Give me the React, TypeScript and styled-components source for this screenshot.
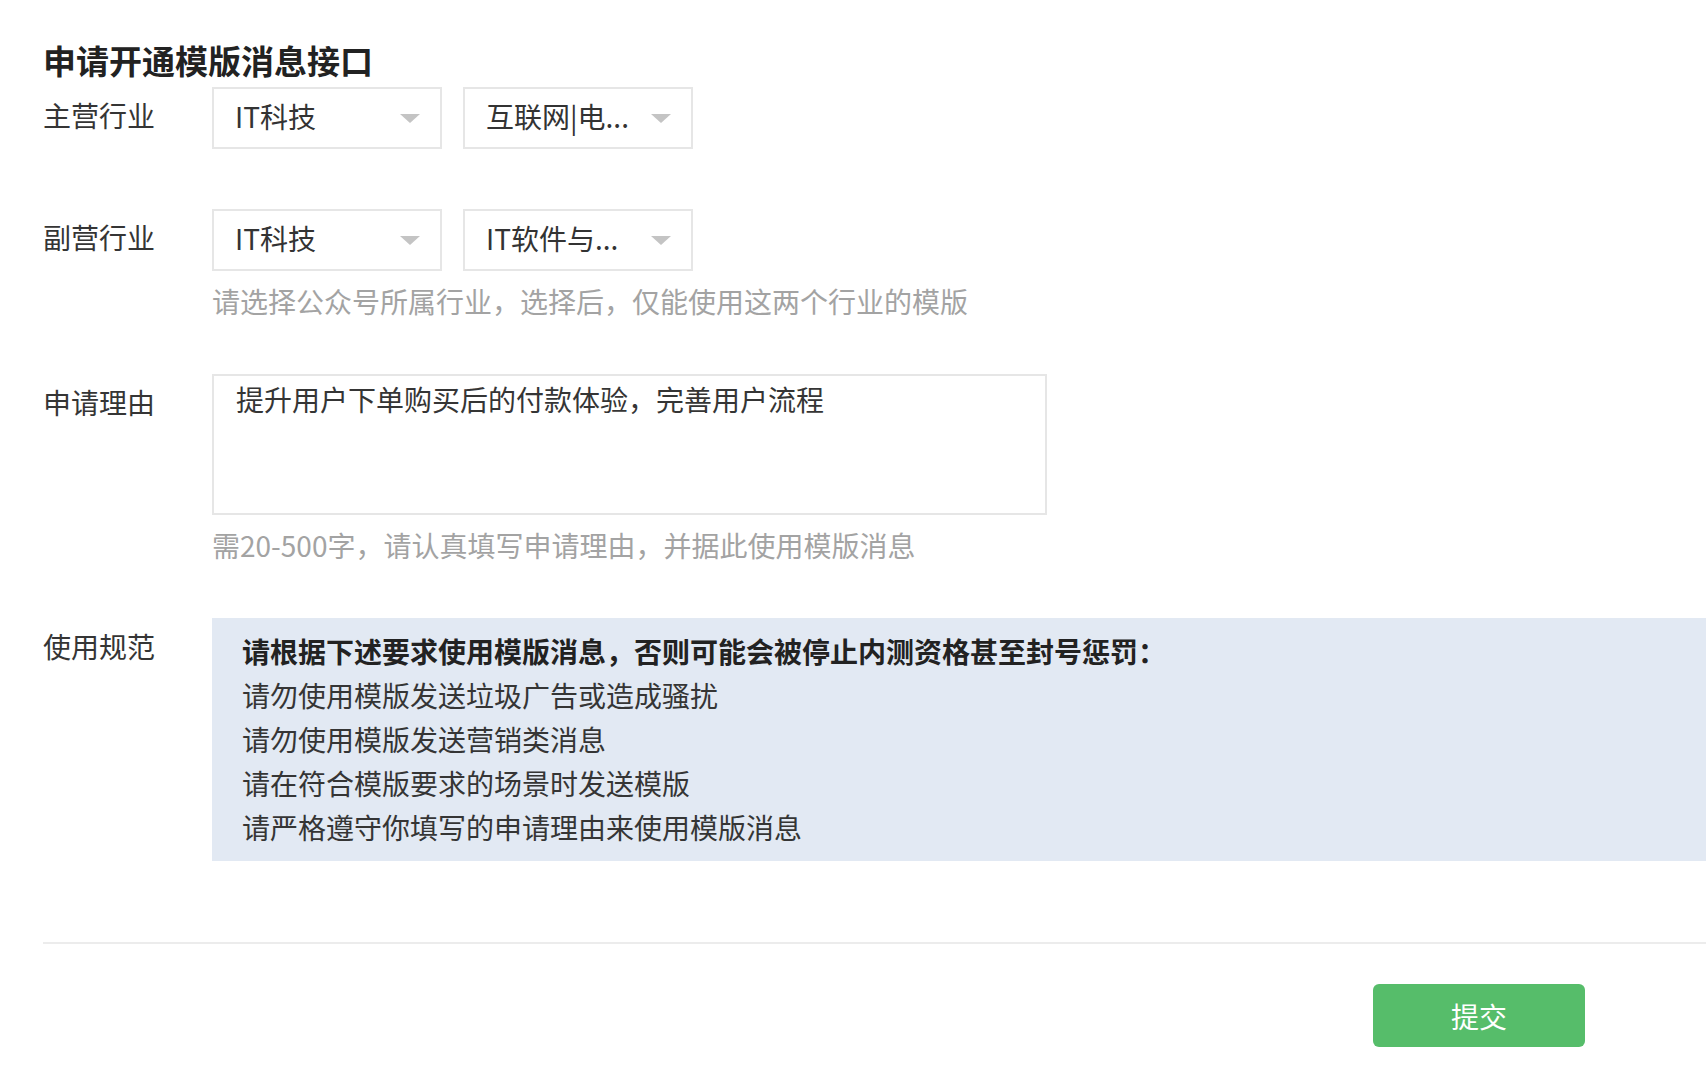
import React from "react";
import styled, { createGlobalStyle } from "styled-components";

const GlobalStyle = createGlobalStyle`
  html, body {
    margin: 0;
    padding: 0;
    background: #fff;
  }
  body {
    font-family: "Noto Sans CJK SC", "Noto Sans", sans-serif;
    color: #353535;
  }
`;

const Page = styled.div`
  padding: 40px 0 40px 43px;
`;

const Title = styled.h2`
  margin: 0;
  font-size: 33px;
  line-height: 40px;
  font-weight: 700;
  color: #222;
`;

const Row = styled.div<{ $top: number }>`
  display: grid;
  grid-template-columns: 169px 1fr;
  margin-top: ${(p) => p.$top}px;
`;

const Label = styled.div`
  font-size: 28px;
  line-height: 57px;
  color: #353535;
`;

const Field = styled.div`
  display: flex;
  flex-direction: column;
`;

const Selects = styled.div`
  display: flex;
  gap: 21px;
`;

const Select = styled.div`
  box-sizing: border-box;
  width: 230px;
  height: 62px;
  border: 2px solid #e6e6e6;
  display: flex;
  align-items: center;
  justify-content: space-between;
  padding: 0 20px 4px 21px;
  font-size: 28px;
  color: #333;
  background: #fff;
`;

const Caret = styled.span`
  width: 0;
  height: 0;
  margin-top: 4px;
  border-left: 10px solid transparent;
  border-right: 10px solid transparent;
  border-top: 9px solid #c4c4c4;
`;

const Hint = styled.div`
  margin-top: 10px;
  font-size: 28px;
  line-height: 40px;
  color: #a3a3a3;
`;

const TextArea = styled.textarea`
  box-sizing: border-box;
  width: 835px;
  height: 141px;
  border: 2px solid #e6e6e6;
  padding: 5px 22px;
  margin: 0;
  resize: none;
  outline: none;
  font-family: "Noto Sans CJK SC", "Noto Sans", sans-serif;
  font-size: 28px;
  line-height: 36px;
  color: #353535;
`;

const RulesBox = styled.div`
  background: #e2e9f3;
  padding: 11px 30px 12px;
`;

const RuleLine = styled.div<{ $strong?: boolean }>`
  font-size: 28px;
  line-height: 44px;
  font-weight: ${(p) => (p.$strong ? 700 : 400)};
  color: ${(p) => (p.$strong ? "#222" : "#353535")};
`;

const Divider = styled.hr`
  margin: 81px 0 0;
  border: 0;
  border-top: 2px solid #ececec;
`;

const Actions = styled.div`
  display: flex;
  justify-content: flex-end;
  padding: 40px 121px 0 0;
`;

const SubmitButton = styled.button`
  width: 212px;
  height: 63px;
  border: 0;
  border-radius: 6px;
  background: #56bd6a;
  color: #fff;
  font-family: "Noto Sans CJK SC", "Noto Sans", sans-serif;
  font-size: 28px;
  cursor: pointer;
`;

const rules = [
  "请勿使用模版发送垃圾广告或造成骚扰",
  "请勿使用模版发送营销类消息",
  "请在符合模版要求的场景时发送模版",
  "请严格遵守你填写的申请理由来使用模版消息",
];

const IndustrySelect = ({ value }: { value: string }) => (
  <Select>
    <span>{value}</span>
    <Caret />
  </Select>
);

const App = () => {
  return (
    <Page>
      <GlobalStyle />
      <Title>申请开通模版消息接口</Title>

      <Row $top={7}>
        <Label>主营行业</Label>
        <Selects>
          <IndustrySelect value="IT科技" />
          <IndustrySelect value="互联网|电..." />
        </Selects>
      </Row>

      <Row $top={60}>
        <Label>副营行业</Label>
        <Field>
          <Selects>
            <IndustrySelect value="IT科技" />
            <IndustrySelect value="IT软件与..." />
          </Selects>
          <Hint>请选择公众号所属行业，选择后，仅能使用这两个行业的模版</Hint>
        </Field>
      </Row>

      <Row $top={53}>
        <Label>申请理由</Label>
        <Field>
          <TextArea defaultValue="提升用户下单购买后的付款体验，完善用户流程" />
          <Hint>需20-500字，请认真填写申请理由，并据此使用模版消息</Hint>
        </Field>
      </Row>

      <Row $top={53}>
        <Label>使用规范</Label>
        <RulesBox>
          <RuleLine $strong>
            请根据下述要求使用模版消息，否则可能会被停止内测资格甚至封号惩罚：
          </RuleLine>
          {rules.map((r) => (
            <RuleLine key={r}>{r}</RuleLine>
          ))}
        </RulesBox>
      </Row>

      <Divider />
      <Actions>
        <SubmitButton>提交</SubmitButton>
      </Actions>
    </Page>
  );
};

export default App;
